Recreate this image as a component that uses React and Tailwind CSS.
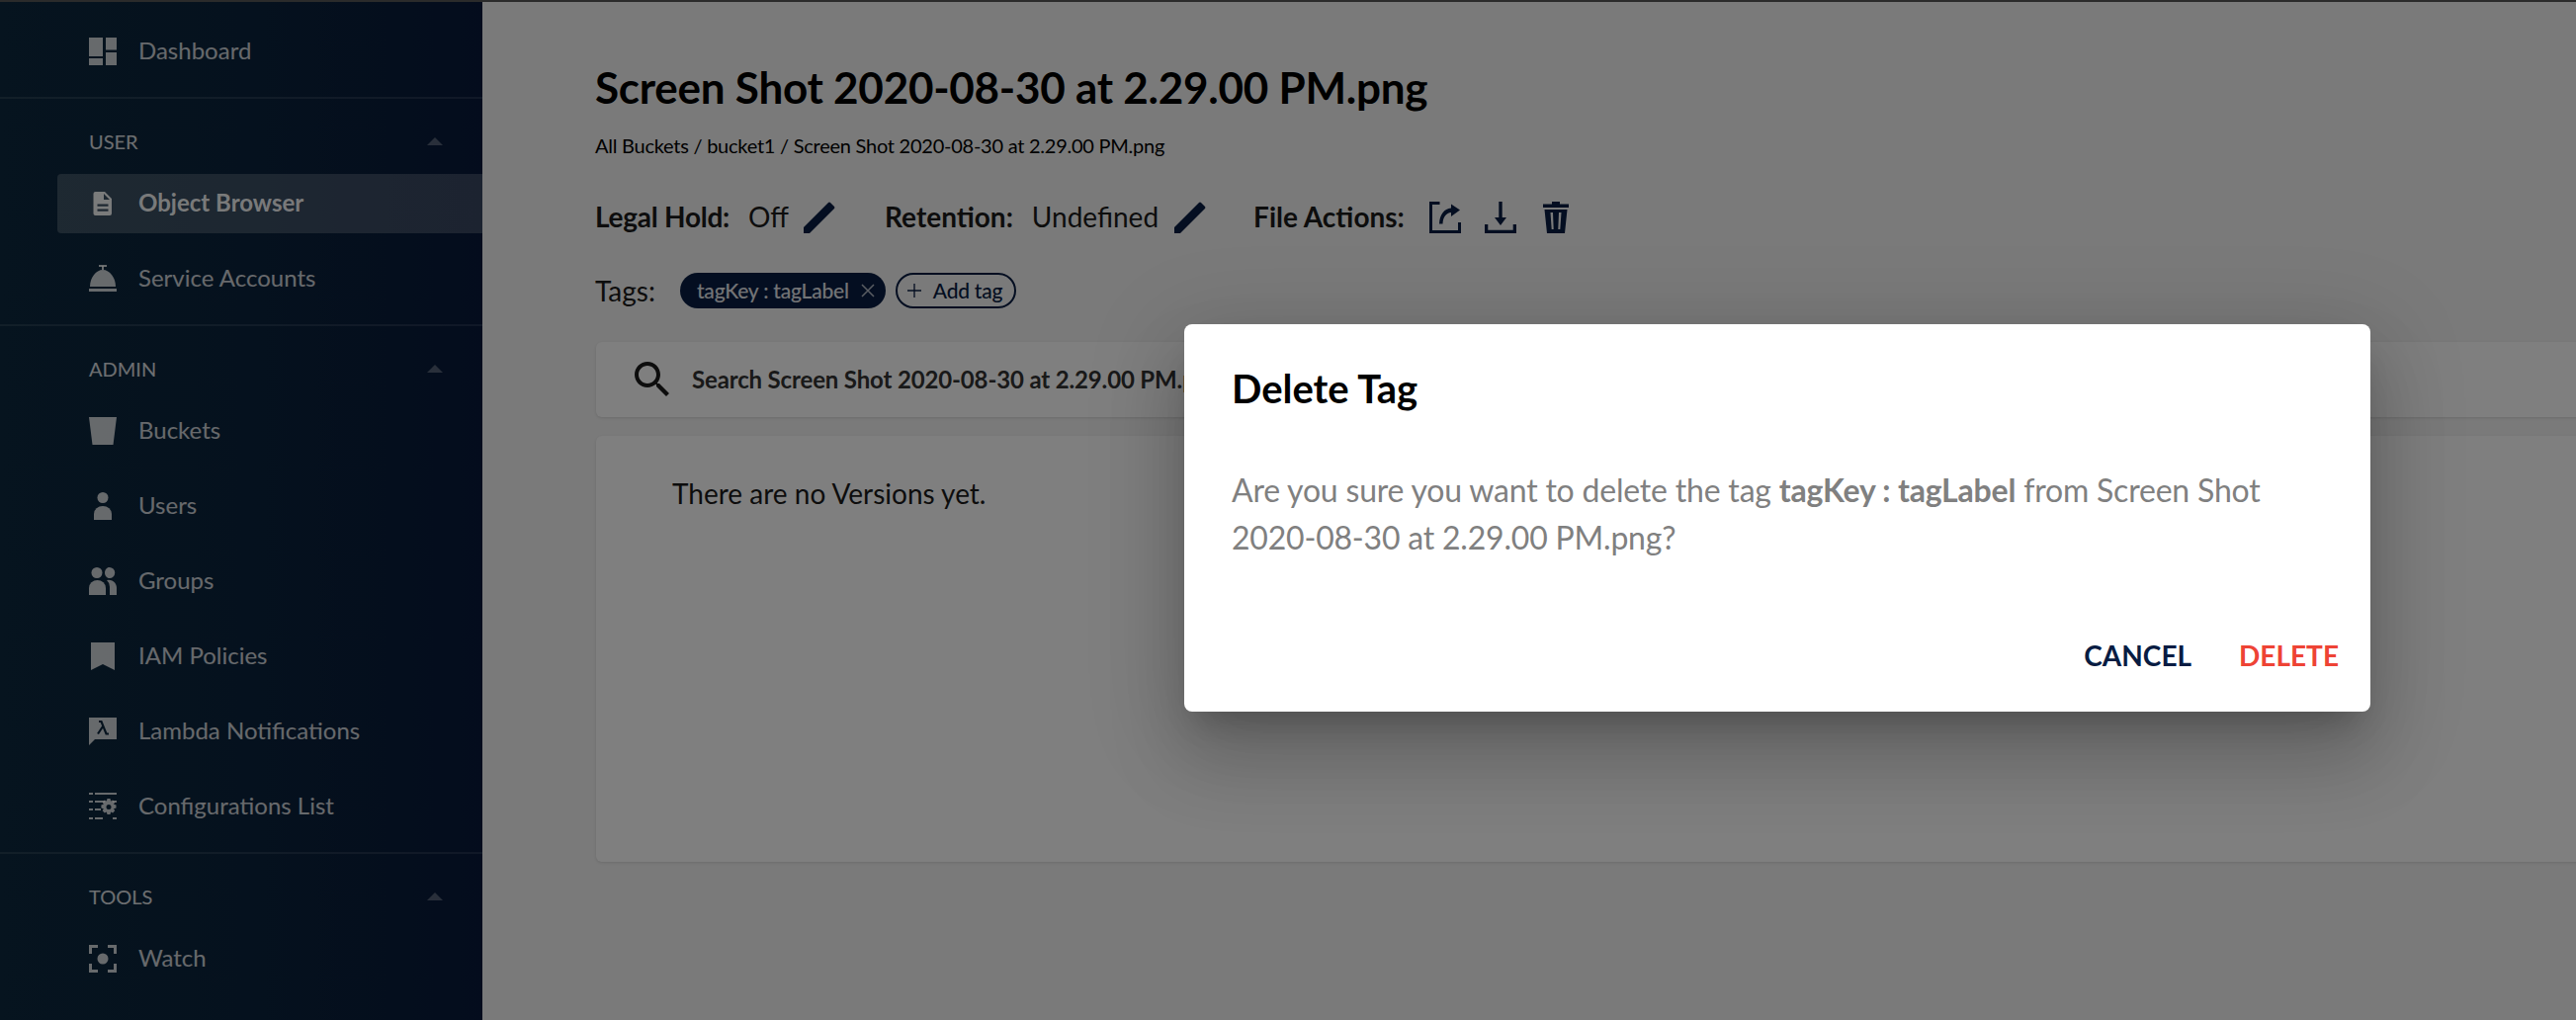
const Dashboard = () => (
  <svg viewBox="0 0 28 28" className="h-[28px] w-[28px] fill-current">
    <rect x="0" y="0" width="14" height="19" />
    <rect x="17" y="0" width="11" height="12.5" />
    <rect x="0" y="21" width="14" height="7" />
    <rect x="17" y="15" width="11" height="13" />
  </svg>
);

const Doc = () => (
  <svg viewBox="0 0 28 28" className="h-[28px] w-[28px] fill-current">
    <path
      fillRule="evenodd"
      d="M6.500 2h9.500l7 7v15a2 2 0 0 1-2 2H6.500a2 2 0 0 1-2-2V4a2 2 0 0 1 2-2zM15 4v6h6zM8.500 14.500v2.200h11v-2.200zM8.500 19.500v2.200h11v-2.200z"
    />
  </svg>
);

const Bell = () => (
  <svg viewBox="0 0 28 28" className="h-[28px] w-[28px] fill-current">
    <rect x="10" y="0" width="8" height="2" />
    <rect x="13" y="1" width="2" height="4" />
    <path d="M1 22C1 13 7 5 14 5s13 8 13 17z" />
    <rect x="0" y="24" width="28" height="3" />
  </svg>
);

const Bucket = () => (
  <svg viewBox="0 0 28 28" className="h-[28px] w-[28px] fill-current">
    <path d="M0 0h28l-3.500 28h-21z" />
  </svg>
);

const User = () => (
  <svg viewBox="0 0 28 28" className="h-[28px] w-[28px] fill-current">
    <circle cx="14" cy="5.500" r="5.500" />
    <path d="M5 28v-6a9 8 0 0 1 18 0v6z" />
  </svg>
);

const Groups = () => (
  <svg viewBox="0 0 28 28" className="h-[28px] w-[28px] fill-current">
    <circle cx="8" cy="5.500" r="5.500" />
    <path d="M16 5.500c0-2.800 1.900-5.500 4.700-5.500a5.500 5.500 0 0 1 0 11C17.900 11 16 8.300 16 5.500z" />
    <path d="M0 28v-7a8.500 8 0 0 1 17 0v7z" />
    <path d="M18 13a8 8 0 0 1 10 8v7h-7v-8a9 9 0 0 0-3-7z" />
  </svg>
);

const Bookmark = () => (
  <svg viewBox="0 0 28 28" className="h-[28px] w-[28px] fill-current">
    <path d="M2 0h24v28L14 22 2 28z" />
  </svg>
);

const Lambda = () => (
  <svg viewBox="0 0 28 28" className="h-[28px] w-[28px]">
    <path className="fill-current" d="M0 0h28v22H6l-6 6z" />
    <path
      d="M10 4h2.500l5 12.500h2.500M14 9l-5 7.500"
      fill="none"
      stroke="#0c263c"
      strokeWidth="2.200"
    />
  </svg>
);

const ConfigList = () => (
  <svg viewBox="0 0 28 28" className="h-[28px] w-[28px] fill-current">
    <rect x="0" y="0" width="4" height="2" />
    <rect x="6" y="0" width="22" height="2" />
    <rect x="0" y="8" width="4" height="2" />
    <rect x="6" y="8" width="10" height="2" />
    <rect x="0" y="16" width="4" height="2" />
    <rect x="6" y="16" width="6" height="2" />
    <rect x="0" y="25" width="4" height="2" />
    <rect x="6" y="25" width="8" height="2" />
    <rect x="24" y="8" width="4" height="2" />
    <rect x="24" y="25" width="4" height="2" />
    <path
      fillRule="evenodd"
      d="M18.500 6h3l.6 2.500 2-.9 2.100 2.100-1.200 2.100 2.500.7v3l-2.500.7 1.200 2.100-2.100 2.100-2-1-.6 2.600h-3l-.7-2.600-2 1-2.100-2.100 1.100-2.100-2.400-.7v-3l2.400-.7-1.100-2.100 2.100-2.100 2 .9zM20 12a2.500 2.500 0 1 0 0 5 2.500 2.500 0 0 0 0-5z"
    />
  </svg>
);

const Watch = () => (
  <svg viewBox="0 0 28 28" className="h-[28px] w-[28px] fill-current">
    <path d="M0 0h9v3H3v6H0zM19 0h9v9h-3V3h-6zM0 19h3v6h6v3H0zM25 19h3v9h-9v-3h6z" />
    <circle cx="14" cy="14" r="5.500" />
  </svg>
);

const Caret = () => (
  <svg viewBox="0 0 16 8" className="h-[8px] w-[16px] fill-white/30">
    <path d="M8 0l8 8H0z" />
  </svg>
);

const Pencil = () => (
  <svg viewBox="0 0 32 32" className="h-[32px] w-[32px] fill-[#081c42]">
    <path d="M0 26L25 1a1.500 1.500 0 0 1 2 0l4 4a1.500 1.500 0 0 1 0 2L6 32H0z" />
  </svg>
);

const Share = () => (
  <svg viewBox="0 0 32 32" className="h-[32px] w-[32px] fill-[#081c42]">
    <path d="M0 0h10.500v3H3v26h26V21h3v11H0z" />
    <path d="M22 2.500L31 8.500 22 15v-4c-5 .5-8 4-8.500 11.500H10C10.500 13 15 7 22 6.500z" />
  </svg>
);

const Download = () => (
  <svg viewBox="0 0 32 32" className="h-[32px] w-[32px] fill-[#081c42]">
    <path d="M14.300 0h3.400v16H22l-6 8-6-8h4.300z" />
    <path d="M0 23h3.300v5.700h25.400V23H32v9H0z" />
  </svg>
);

const Trash = () => (
  <svg viewBox="0 0 26 32" className="h-[32px] w-[26px] fill-[#081c42]">
    <path d="M9 0h8v2.500h9V6H0V2.500h9z" />
    <path
      fillRule="evenodd"
      d="M1.500 8h23L22 32H4zM7.500 11l1.200 17h2L10 11zM16 11l-.7 17h2l1.200-17z"
    />
  </svg>
);

const SearchIcon = () => (
  <svg viewBox="0 0 24 24" className="h-[48px] w-[48px] fill-[#1a1a1a]">
    <path d="M15.500 14h-.79l-.28-.27C15.410 12.590 16 11.110 16 9.500 16 5.910 13.090 3 9.500 3S3 5.910 3 9.500 5.910 16 9.500 16c1.610 0 3.090-.59 4.230-1.570l.27.28v.79l5 4.990L20.490 19l-4.990-5zm-6 0C7.010 14 5 11.990 5 9.500S7.010 5 9.500 5 14 7.010 14 9.500 11.990 14 9.500 14z" />
  </svg>
);

function NavItem({ icon, label, active }) {
  return (
    <div
      className={
        active
          ? "ml-[58px] flex h-[60px] items-center rounded-l-[4px] bg-white/20 pl-[32px] font-bold text-white/95"
          : "ml-[58px] flex h-[60px] items-center pl-[32px] text-white/80"
      }
    >
      <span className="mr-[22px] flex h-[28px] w-[28px] shrink-0 items-center justify-center">
        {icon}
      </span>
      <span className="pb-[2px] text-[24px] leading-none">{label}</span>
    </div>
  );
}

function NavSection({ title, items }) {
  return (
    <div className="border-t-2 border-white/10">
      <div className="flex h-[76px] items-center justify-between pb-[10px] pl-[90px] pr-[40px] pt-[20px] text-[20px] text-white/85">
        <span>{title}</span>
        <Caret />
      </div>
      <div className="flex flex-col gap-[16px] pb-[16px]">
        {items.map((it) => (
          <NavItem key={it.label} {...it} />
        ))}
      </div>
    </div>
  );
}

export default function App() {
  return (
    <div className="h-[1032px] w-[2606px] overflow-hidden font-['Lato','Liberation_Sans',sans-serif]">
      <div className="h-[2px] bg-[#2b2b2b]" />
      <div className="relative flex h-[1030px]">
        <aside className="h-full w-[488px] shrink-0 bg-linear-to-r from-[#0c283e] via-[#0b233c] to-[#08193a]">
          <div className="pb-[16px] pt-[20px]">
            <NavItem icon={<Dashboard />} label="Dashboard" />
          </div>
          <NavSection
            title="USER"
            items={[
              { icon: <Doc />, label: "Object Browser", active: true },
              { icon: <Bell />, label: "Service Accounts" },
            ]}
          />
          <NavSection
            title="ADMIN"
            items={[
              { icon: <Bucket />, label: "Buckets" },
              { icon: <User />, label: "Users" },
              { icon: <Groups />, label: "Groups" },
              { icon: <Bookmark />, label: "IAM Policies" },
              { icon: <Lambda />, label: "Lambda Notifications" },
              { icon: <ConfigList />, label: "Configurations List" },
            ]}
          />
          <NavSection
            title="TOOLS"
            items={[{ icon: <Watch />, label: "Watch" }]}
          />
        </aside>

        <main className="min-w-0 flex-1 bg-[#f4f4f4] pl-[114px] pt-[62px] text-[#1a1a1a]">
          <h1 className="h-[48px] whitespace-nowrap text-[44px] font-bold leading-[48px] tracking-[-0.25px] text-black">
            Screen Shot 2020-08-30 at 2.29.00 PM.png
          </h1>
          <div className="mt-[21px] h-[28px] text-[20px] leading-[28px] tracking-[-0.25px] text-black">
            All Buckets / bucket1 / Screen Shot 2020-08-30 at 2.29.00 PM.png
          </div>

          <div className="mt-[43px] flex h-[32px] items-start text-[28px] leading-[30px]">
            <span className="font-bold tracking-[-0.25px]">Legal Hold:</span>
            <span className="ml-[19px]">Off</span>
            <span className="ml-[15px]">
              <Pencil />
            </span>
            <span className="ml-[50px] font-bold">Retention:</span>
            <span className="ml-[19px]">Undefined</span>
            <span className="ml-[16px]">
              <Pencil />
            </span>
            <span className="ml-[48px] font-bold">File Actions:</span>
            <div className="ml-[25px] flex items-center">
              <Share />
              <span className="ml-[24px]">
                <Download />
              </span>
              <span className="ml-[27px]">
                <Trash />
              </span>
            </div>
          </div>

          <div className="mt-[40px] flex h-[36px] items-center">
            <span className="text-[28px] leading-[32px]">Tags:</span>
            <span className="ml-[25px] flex h-[36px] items-center rounded-full bg-[#081c42] pl-[17px] pr-[11px] text-[21px] font-medium tracking-[-0.2px] text-white/90">
              tagKey : tagLabel
              <svg viewBox="0 0 14 14" className="ml-[12px] h-[14px] w-[14px] stroke-white/70" strokeWidth="1.500">
                <path d="M1 1l12 12M13 1L1 13" />
              </svg>
            </span>
            <span className="ml-[10px] flex h-[36px] items-center rounded-full border-2 border-[#081c42] pl-[10px] pr-[12px] text-[21px] font-medium tracking-[-0.25px] text-[#081c42]">
              <svg viewBox="0 0 16 16" className="mr-[12px] h-[14px] w-[14px] stroke-[#081c42]" strokeWidth="1.500">
                <path d="M8 0v16M0 8h16" />
              </svg>
              Add tag
            </span>
          </div>

          <div className="-mr-[12px] ml-[1px] mt-[34px] flex h-[76px] items-center rounded-[6px] bg-white pl-[33px] shadow-[0_1px_3px_rgba(0,0,0,0.12)]">
            <SearchIcon />
            <span className="ml-[16px] text-[24px] font-bold tracking-[-0.15px] text-[#333]">
              Search Screen Shot 2020-08-30 at 2.29.00 PM.png
            </span>
          </div>

          <div className="-mr-[12px] ml-[1px] mt-[19px] h-[431px] rounded-[6px] bg-white pl-[77px] pt-[38px] shadow-[0_1px_3px_rgba(0,0,0,0.12)]">
            <p className="text-[28px] leading-[40px]">There are no Versions yet.</p>
          </div>
        </main>

        {/* delete tag dialog */}
        <div className="absolute inset-0 bg-black/50">
          <div className="absolute left-[1198px] top-[326px] h-[392px] w-[1200px] rounded-[8px] bg-white pl-[48px] pr-[32px] pt-[39px] shadow-[0_22px_30px_-14px_rgba(0,0,0,0.2),0_48px_76px_6px_rgba(0,0,0,0.14),0_18px_92px_16px_rgba(0,0,0,0.12)]">
            <h2 className="text-[40px] font-bold leading-[52px] text-black">Delete Tag</h2>
            <p className="mt-[53px] w-[1080px] text-[32px] leading-[48px] tracking-[-0.2px] text-[#808080]">
              Are you sure you want to delete the tag{" "}
              <b className="font-bold">tagKey : tagLabel</b> from Screen Shot 2020-08-30 at 2.29.00 PM.png?
            </p>
            <div className="mt-[77px] flex justify-end gap-[48px] text-[28px] font-bold leading-[36px]">
              <span className="text-[#081c42]">CANCEL</span>
              <span className="text-[#ee4335]">DELETE</span>
            </div>
          </div>
        </div>
      </div>
    </div>
  );
}
